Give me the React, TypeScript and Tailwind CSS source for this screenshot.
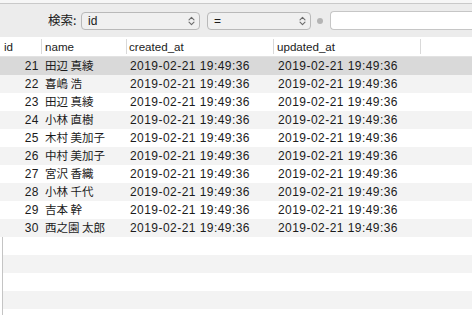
const rows = [
  { id: 21, name: "田辺 真綾" },
  { id: 22, name: "喜嶋 浩" },
  { id: 23, name: "田辺 真綾" },
  { id: 24, name: "小林 直樹" },
  { id: 25, name: "木村 美加子" },
  { id: 26, name: "中村 美加子" },
  { id: 27, name: "宮沢 香織" },
  { id: 28, name: "小林 千代" },
  { id: 29, name: "吉本 幹" },
  { id: 30, name: "西之園 太郎" },
];

const stamp = "2019-02-21 19:49:36";

function UpDown() {
  return (
    <svg width="7" height="10" viewBox="0 0 7 10" fill="none" stroke="#6b6b6b" strokeWidth="1.1" strokeLinecap="round" strokeLinejoin="round">
      <path d="M1 3.8 L3.5 1.3 L6 3.8" />
      <path d="M1 6.2 L3.5 8.7 L6 6.2" />
    </svg>
  );
}

export default function App() {
  return (
    <div className="w-[472px] h-[315px] overflow-hidden bg-white text-[#1b1b1b] font-['Liberation_Sans','Noto_Sans_CJK_JP',sans-serif]">
      <div className="h-[3px] bg-[#f6f6f6]" />
      <div className="h-[1px] bg-[#c9c9c9]" />

      {/* search bar */}
      <div className="h-[33px] bg-[#ececec] flex items-center pl-[48px]">
        <span className="w-[33px] text-[12.5px] font-['Noto_Sans_CJK_JP',sans-serif]">検索:</span>
        <div className="w-[119px] h-[18px] rounded-[4px] border border-[#b9b9b9] bg-[#f0f0f0] flex items-center justify-between pl-[6px] pr-[4px] text-[12px]">
          <span>id</span>
          <UpDown />
        </div>
        <div className="ml-[7px] w-[104px] h-[18px] rounded-[4px] border border-[#b9b9b9] bg-[#f0f0f0] flex items-center justify-between pl-[6px] pr-[4px] text-[12px]">
          <span>=</span>
          <UpDown />
        </div>
        <div className="ml-[6px] w-[6px] h-[6px] rounded-full bg-[#b4b4b4]" />
        <div className="ml-[7px] flex-1 h-[19px] rounded-l-[4px] border border-r-0 border-[#c6c6c6] bg-white" />
      </div>

      {/* header */}
      <div className="h-[20px] flex items-stretch bg-white border-b border-[#e2e2e2] text-[11.6px]">
        <div className="w-[41px] pl-[4px] flex items-center">id</div>
        <div className="w-[85px] pl-[3px] flex items-center border-l border-[#d9d9d9] my-[2px]">name</div>
        <div className="w-[147px] pl-[2px] flex items-center border-l border-[#d9d9d9] my-[2px]">created_at</div>
        <div className="w-[147px] pl-[3px] flex items-center border-l border-[#d9d9d9] my-[2px]">updated_at</div>
        <div className="flex-1 border-l border-[#d9d9d9] my-[2px]" />
      </div>

      {/* data rows */}
      <div>
        {rows.map((r, i) => (
          <div
            key={r.id}
            className={`h-[18px] flex items-center text-[12px] ${
              i === 0 ? "bg-[#d9d9d9]" : i % 2 === 1 ? "bg-[#f3f3f3]" : "bg-white"
            }`}
          >
            <div className="w-[41px] pr-[2px] text-right tracking-[0.45px]">{r.id}</div>
            <div className="w-[85px] pl-[4px] text-[11.5px] font-['Noto_Sans_CJK_JP',sans-serif]">{r.name}</div>
            <div className="w-[147px] pl-[4px] tracking-[0.45px]">{stamp}</div>
            <div className="w-[147px] pl-[5px] tracking-[0.45px]">{stamp}</div>
          </div>
        ))}
      </div>

      {/* empty rows */}
      <div className="ml-[2px] border-l border-[#c4c4c4]">
        {[0, 1, 2, 3, 4].map((n) => (
          <div key={n} className={`h-[18px] ${n % 2 === 1 ? "bg-[#f3f3f3]" : "bg-white"}`} />
        ))}
      </div>
    </div>
  );
}
